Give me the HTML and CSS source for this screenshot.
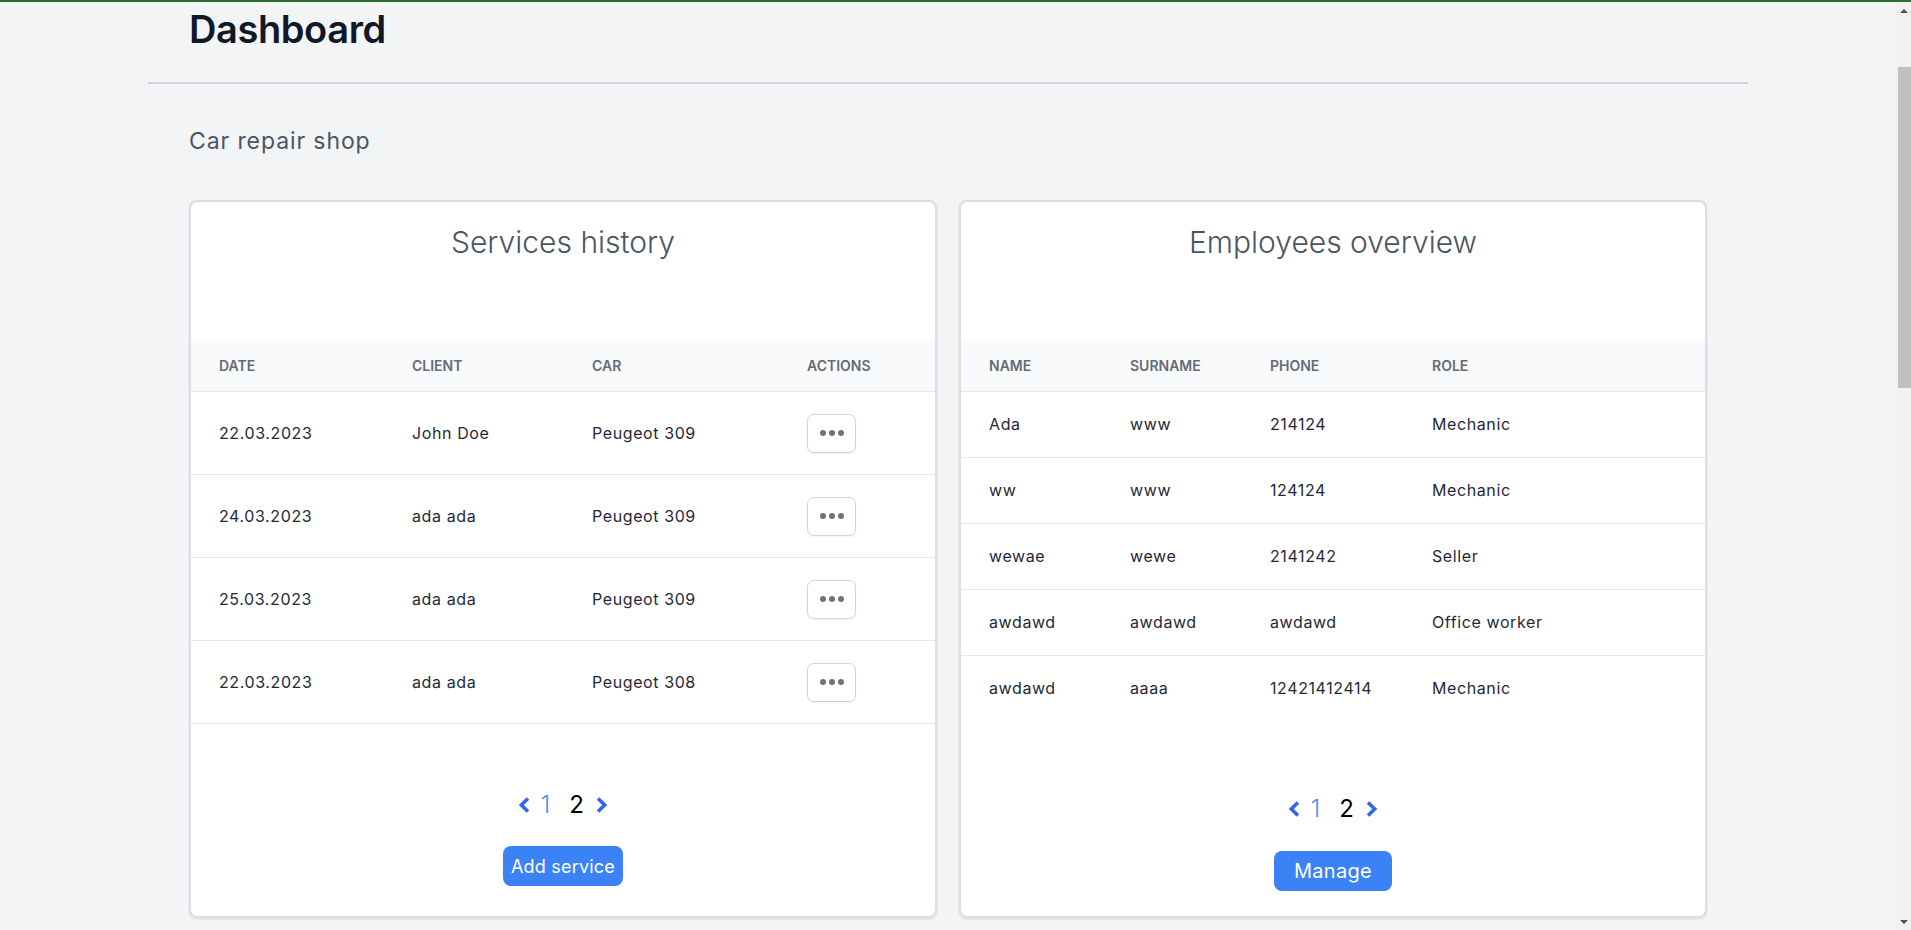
FILE: index.html
```html
<!DOCTYPE html>
<html lang="en">
<head>
<meta charset="utf-8">
<title>Dashboard</title>
<link rel="stylesheet" href="styles.css">
</head>
<body>
<div class="topbar"></div>
<div class="frame">
  <div class="viewport">
    <div class="container">
      <header class="page-header">
        <h1 class="page-title">Dashboard</h1>
      </header>
      <hr class="divider">
      <main class="content">
        <h2 class="shop-name">Car repair shop</h2>
        <div class="cards">
          <section class="card">
            <h3 class="card-title">Services history</h3>
            <table class="data-table services">
              <colgroup><col class="c-date"><col class="c-client"><col class="c-car"><col></colgroup>
              <thead>
                <tr><th>Date</th><th>Client</th><th>Car</th><th>Actions</th></tr>
              </thead>
              <tbody>
                <tr><td>22.03.2023</td><td>John Doe</td><td>Peugeot 309</td><td><button class="dots-btn"><span></span><span></span><span></span></button></td></tr>
                <tr><td>24.03.2023</td><td>ada ada</td><td>Peugeot 309</td><td><button class="dots-btn"><span></span><span></span><span></span></button></td></tr>
                <tr><td>25.03.2023</td><td>ada ada</td><td>Peugeot 309</td><td><button class="dots-btn"><span></span><span></span><span></span></button></td></tr>
                <tr><td>22.03.2023</td><td>ada ada</td><td>Peugeot 308</td><td><button class="dots-btn"><span></span><span></span><span></span></button></td></tr>
              </tbody>
            </table>
            <nav class="pager pager-services">
              <svg class="chev chev-prev" width="12" height="16" viewBox="0 0 12 16"><path d="M10 1.5 L3.3 8 L10 14.5" fill="none" stroke="#3367e4" stroke-width="3.6"/></svg>
              <span class="pg pg-link">1</span>
              <span class="pg pg-current">2</span>
              <svg class="chev chev-next" width="12" height="16" viewBox="0 0 12 16"><path d="M2 1.5 L8.7 8 L2 14.5" fill="none" stroke="#3367e4" stroke-width="3.6"/></svg>
            </nav>
            <div class="card-actions">
              <button class="primary-btn btn-add">Add service</button>
            </div>
          </section>
          <section class="card">
            <h3 class="card-title">Employees overview</h3>
            <table class="data-table employees">
              <colgroup><col class="c-name"><col class="c-surname"><col class="c-phone"><col></colgroup>
              <thead>
                <tr><th>Name</th><th>Surname</th><th>Phone</th><th>Role</th></tr>
              </thead>
              <tbody>
                <tr><td>Ada</td><td>www</td><td>214124</td><td>Mechanic</td></tr>
                <tr><td>ww</td><td>www</td><td>124124</td><td>Mechanic</td></tr>
                <tr><td>wewae</td><td>wewe</td><td>2141242</td><td>Seller</td></tr>
                <tr><td>awdawd</td><td>awdawd</td><td>awdawd</td><td>Office worker</td></tr>
                <tr><td>awdawd</td><td>aaaa</td><td>12421412414</td><td>Mechanic</td></tr>
              </tbody>
            </table>
            <nav class="pager pager-employees">
              <svg class="chev chev-prev" width="12" height="16" viewBox="0 0 12 16"><path d="M10 1.5 L3.3 8 L10 14.5" fill="none" stroke="#3367e4" stroke-width="3.6"/></svg>
              <span class="pg pg-link">1</span>
              <span class="pg pg-current">2</span>
              <svg class="chev chev-next" width="12" height="16" viewBox="0 0 12 16"><path d="M2 1.5 L8.7 8 L2 14.5" fill="none" stroke="#3367e4" stroke-width="3.6"/></svg>
            </nav>
            <div class="card-actions">
              <button class="primary-btn btn-manage">Manage</button>
            </div>
          </section>
        </div>
      </main>
    </div>
  </div>
  <div class="scrollbar">
    <div class="sb-arrow sb-up"></div>
    <div class="sb-thumb"></div>
    <div class="sb-track"></div>
    <div class="sb-arrow sb-down"></div>
  </div>
</div>
</body>
</html>
```
FILE: styles.css
```css
* { box-sizing: border-box; }

html, body {
  margin: 0;
  padding: 0;
}

body {
  height: 930px;
  overflow: hidden;
  display: flex;
  flex-direction: column;
  background: #f3f4f6;
  font-family: Inter, "Liberation Sans", sans-serif;
  color: #1f2937;
}

.topbar {
  height: 2px;
  background: #2f6b33;
  flex: none;
}

.frame {
  flex: 1;
  display: flex;
  min-height: 0;
}

.viewport {
  flex: 1;
  min-width: 0;
  overflow: hidden;
}

.container {
  max-width: 1600px;
  margin: 0 auto;
}

.page-header {
  padding: 3px 41px 0;
}

.page-title {
  margin: 0 0 29px;
  font-size: 38px;
  line-height: 48px;
  font-weight: 600;
  letter-spacing: -0.4px;
  color: #111827;
}

.divider {
  margin: 0;
  border: 0;
  height: 2px;
  background: #d1d5db;
}

.content {
  padding: 0 41px;
}

.shop-name {
  margin: 43px 0 45px;
  font-size: 23px;
  line-height: 28px;
  font-weight: 400;
  letter-spacing: 0.9px;
  color: #4b5563;
}

.cards {
  display: grid;
  grid-template-columns: 1fr 1fr;
  gap: 22px;
}

.card {
  height: 718px;
  background: #fff;
  border: 2px solid #dcdee3;
  border-radius: 8px;
  box-shadow: 0 1px 2px rgba(0, 0, 0, 0.12);
  padding-top: 22px;
  overflow: hidden;
}

.card-title {
  margin: 0 0 81px;
  text-align: center;
  font-size: 30px;
  line-height: 36px;
  font-weight: 300;
  color: #4b5563;
}

.data-table {
  width: 100%;
  table-layout: fixed;
  border-collapse: separate;
  border-spacing: 0;
}

.c-date { width: 193px; }
.c-client { width: 180px; }
.c-car { width: 215px; }
.c-name { width: 141px; }
.c-surname { width: 140px; }
.c-phone { width: 162px; }

.data-table th {
  text-align: left;
  padding: 14px 0 14px 28px;
  line-height: 22px;
  font-size: 14px;
  font-weight: 600;
  text-transform: uppercase;
  color: #646b78;
  background: #f9fafb;
  border-bottom: 1px solid #e5e7eb;
}

.data-table td {
  font-size: 16px;
  line-height: 24px;
  letter-spacing: 0.6px;
  color: #1f2937;
  padding-left: 28px;
  vertical-align: middle;
  border-bottom: 1px solid #e5e7eb;
  white-space: nowrap;
}

.services td {
  padding-top: 21.5px;
  padding-bottom: 21.5px;
}

.employees td {
  padding-top: 20px;
  padding-bottom: 20px;
  line-height: 25px;
}

.employees tbody tr:last-child td {
  border-bottom: 0;
}

.dots-btn {
  display: flex;
  align-items: center;
  justify-content: center;
  gap: 3px;
  width: 49px;
  height: 39px;
  padding: 0;
  background: #fff;
  border: 1px solid #d1d5db;
  border-radius: 7px;
  box-shadow: 0 1px 2px rgba(0, 0, 0, 0.06);
}

.dots-btn span {
  width: 6px;
  height: 6px;
  border-radius: 50%;
  background: #6b7280;
}

.pager {
  display: flex;
  justify-content: center;
  align-items: center;
  height: 32px;
}

.pager-services { margin-top: 65px; }
.pager-employees { margin-top: 72px; }

.chev { display: block; flex: none; }
.chev-prev { margin-right: 4.5px; }
.chev-next { margin-left: 8.5px; }

.pg {
  font-size: 24px;
  line-height: 32px;
  width: 22px;
  text-align: center;
  flex: none;
}

.pg-link {
  color: #4b8cf5;
  font-weight: 300;
}

.pg-current {
  color: #000;
  margin-left: 9px;
}

.card-actions {
  display: flex;
  justify-content: center;
  margin-top: 25px;
}

.pager-employees + .card-actions { margin-top: 26px; }

.primary-btn {
  height: 40px;
  border: 0;
  border-radius: 8px;
  background: #3b82f6;
  color: #fff;
  font-family: Inter, "Liberation Sans", sans-serif;
  padding: 0;
}

.btn-add {
  width: 120px;
  font-size: 18px;
  letter-spacing: 0.2px;
}

.btn-manage {
  width: 118px;
  font-size: 20px;
  letter-spacing: 0.3px;
}

.scrollbar {
  width: 15px;
  flex: none;
  display: flex;
  flex-direction: column;
  background: #f1f1f1;
}

.sb-arrow {
  height: 17px;
  flex: none;
  display: flex;
  justify-content: center;
  align-items: center;
}

.sb-up::before,
.sb-down::before {
  content: "";
  width: 0;
  height: 0;
  border-left: 4px solid transparent;
  border-right: 4px solid transparent;
}

.sb-up::before { border-bottom: 4px solid #505050; }
.sb-down::before { border-top: 4px solid #505050; }

.sb-thumb {
  flex: none;
  height: 321px;
  margin: 48px 0 0 2px;
  background: #c1c1c1;
}

.sb-track { flex: 1; }
```
